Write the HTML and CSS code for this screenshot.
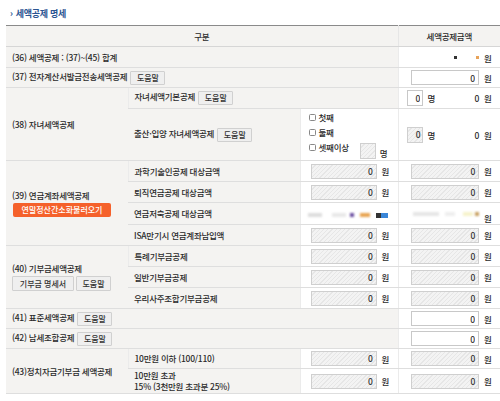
FILE: index.html
```html
<!DOCTYPE html>
<html lang="ko">
<head>
<meta charset="utf-8">
<link rel="stylesheet" href="styles.css">
</head>
<body>
<div class="wrap">
  <h2 class="title"><span class="arrow">›</span>세액공제 명세</h2>
  <table class="grid">
    <colgroup><col class="c1"><col class="c2"><col class="c3"><col class="c4"></colgroup>
    <thead>
      <tr class="h-head"><th colspan="3">구분</th><th>세액공제금액</th></tr>
    </thead>
    <tbody>
      <tr class="h21">
        <td colspan="3" class="lbl">(36) 세액공제 : (37)~(45) 합계</td>
        <td class="val"><span class="sq dark"></span><span class="sq orange"></span><span class="unit">원</span></td>
      </tr>
      <tr class="h20">
        <td colspan="3" class="lbl">(37) 전자계산서발급전송세액공제 <button class="btn">도움말</button></td>
        <td class="val"><input class="inp" value="0"><span class="unit">원</span></td>
      </tr>
      <tr class="h21">
        <td rowspan="2" class="lbl">(38) 자녀세액공제</td>
        <td colspan="2" class="lbl">자녀세액기본공제 <button class="btn">도움말</button></td>
        <td class="val"><span class="pair"><input class="inp small" value="0"><span class="unit">명</span></span><span class="num">0</span><span class="unit">원</span></td>
      </tr>
      <tr class="h52">
        <td class="lbl">출산·입양 자녀세액공제 <button class="btn">도움말</button></td>
        <td class="checks">
          <label class="chk"><span class="box"></span>첫째</label>
          <label class="chk"><span class="box"></span>둘째</label>
          <div class="chk-row"><label class="chk"><span class="box"></span>셋째이상</label><span class="cnt"><span class="inp sq16 dis"></span><span class="unit">명</span></span></div>
        </td>
        <td class="val"><span class="pair"><span class="inp small dis">0</span><span class="unit">명</span></span><span class="num">0</span><span class="unit">원</span></td>
      </tr>
      <tr class="h21">
        <td rowspan="4" class="lbl">
          <div>(39) 연금계좌세액공제</div>
          <button class="btn-orange">연말정산간소화불러오기</button>
        </td>
        <td class="lbl">과학기술인공제 대상금액</td>
        <td class="val"><span class="inp mid dis">0</span><span class="unit">원</span></td>
        <td class="val"><span class="inp dis">0</span><span class="unit">원</span></td>
      </tr>
      <tr class="h21">
        <td class="lbl">퇴직연금공제 대상금액</td>
        <td class="val"><span class="inp mid dis">0</span><span class="unit">원</span></td>
        <td class="val"><span class="inp dis">0</span><span class="unit">원</span></td>
      </tr>
      <tr class="h22">
        <td class="lbl">연금저축공제 대상금액</td>
        <td class="val blur-cell">
          <span class="bl g1"></span><span class="bl g2"></span><span class="bl p1"></span><span class="bl o1"></span><span class="bl b1"></span>
        </td>
        <td class="val blur-cell">
          <span class="bl g3"></span><span class="bl g4"></span><span class="bl y1"></span><span class="bl t1"></span><span class="unit low">원</span>
        </td>
      </tr>
      <tr class="h21">
        <td class="lbl">ISA만기시 연금계좌납입액</td>
        <td class="val"><span class="inp mid dis">0</span><span class="unit">원</span></td>
        <td class="val"><span class="inp dis">0</span><span class="unit">원</span></td>
      </tr>
      <tr class="h21">
        <td rowspan="3" class="lbl">
          <div>(40) 기부금세액공제</div>
          <div class="btns"><button class="btn wide">기부금 명세서</button><button class="btn">도움말</button></div>
        </td>
        <td class="lbl">특례기부금공제</td>
        <td class="val"><span class="inp mid dis">0</span><span class="unit">원</span></td>
        <td class="val"><span class="inp dis">0</span><span class="unit">원</span></td>
      </tr>
      <tr class="h21">
        <td class="lbl">일반기부금공제</td>
        <td class="val"><span class="inp mid dis">0</span><span class="unit">원</span></td>
        <td class="val"><span class="inp dis">0</span><span class="unit">원</span></td>
      </tr>
      <tr class="h21">
        <td class="lbl">우리사주조합기부금공제</td>
        <td class="val"><span class="inp mid dis">0</span><span class="unit">원</span></td>
        <td class="val"><span class="inp dis">0</span><span class="unit">원</span></td>
      </tr>
      <tr class="h20">
        <td colspan="3" class="lbl">(41) 표준세액공제 <button class="btn">도움말</button></td>
        <td class="val"><input class="inp" value="0"><span class="unit">원</span></td>
      </tr>
      <tr class="h20">
        <td colspan="3" class="lbl">(42) 납세조합공제 <button class="btn">도움말</button></td>
        <td class="val"><input class="inp" value="0"><span class="unit">원</span></td>
      </tr>
      <tr class="h20">
        <td rowspan="2" class="lbl">(43)정치자금기부금 세액공제</td>
        <td class="lbl">10만원 이하 (100/110)</td>
        <td class="val"><span class="inp mid dis">0</span><span class="unit">원</span></td>
        <td class="val"><span class="inp dis">0</span><span class="unit">원</span></td>
      </tr>
      <tr class="h25">
        <td class="lbl two">10만원 초과<br>15% (3천만원 초과분 25%)</td>
        <td class="val"><span class="inp mid dis">0</span><span class="unit">원</span></td>
        <td class="val"><span class="inp dis">0</span><span class="unit">원</span></td>
      </tr>
    </tbody>
  </table>
</div>
</body>
</html>
```
FILE: styles.css
```css
* { box-sizing: border-box; }
html, body { margin: 0; padding: 0; background: #fff; }
body {
  font-family: "Noto Sans CJK KR", "Noto Sans", sans-serif;
  font-size: 8.5px;
  font-weight: 500;
  color: #2a2a2a;
  letter-spacing: -0.25px;
}
.wrap { padding: 8px 0 0 6px; width: 500px; }
.title {
  margin: 0 0 5px 4px;
  font-size: 9px;
  font-weight: bold;
  color: #2b5592;
  line-height: 11px;
  height: 12px;
}
.arrow { font-size: 9px; margin-right: 3px; color: #2b5592; }
.grid {
  width: 494px;
  table-layout: fixed;
  border-collapse: collapse;
  border-top: 1px solid #8a8a8a;
}
.c1 { width: 122px; }
.c2 { width: 172px; }
.c3 { width: 98px; }
.c4 { width: 102px; }
.grid th {
  height: 21px;
  background: #f4f3f1;
  font-weight: 500;
  border-bottom: 1px solid #d6d6d6;
  border-left: 1px solid #e6e6e6;
  padding: 0;
}
.grid th:first-child { border-left: none; }
.grid td {
  padding: 0;
  border-bottom: 1px solid #dedede;
  border-left: 1px solid #ebebeb;
  vertical-align: middle;
  white-space: nowrap;
}
.grid td:first-child { border-left: none; }
.h20 { height: 20px; }
.h21 { height: 21px; }
.h22 { height: 22px; }
.h25 { height: 25px; }
.h52 { height: 52px; }
.lbl { background: #f4f3f1; padding-left: 6px !important; line-height: 11px; }
.lbl.two { line-height: 11px; }
.val { background: #fff; text-align: right; padding-right: 7px !important; }
.unit { display: inline-block; margin-left: 5px; width: 9px; text-align: left; vertical-align: middle; }
.unit.low { position: relative; top: 4px; }
.inp {
  display: inline-block;
  vertical-align: middle;
  width: 68px;
  height: 15px;
  border: 1px solid #c8c8c8;
  background: #fff;
  font: inherit;
  color: #333;
  text-align: right;
  padding: 0 3px;
  line-height: 13px;
  margin: 0;
}
.inp.mid { width: 66px; }
.inp.small { width: 16px; height: 16px; padding: 0 2px; }
.inp.sq16 { width: 16px; height: 16px; }
.dis {
  background: repeating-linear-gradient(135deg, #f3f3f3 0 2px, #e6e6e6 2px 3px);
  border-color: #cfcfcf;
}
.pair { display: inline-block; margin-right: 38px; }
.pair .unit { margin-left: 4px; }
.num { display: inline-block; vertical-align: middle; }
.sq { display: inline-block; width: 3px; height: 3px; vertical-align: middle; }
.sq.dark { background: #333; margin-right: 19px; }
.sq.orange { background: #e8a35a; }
.btn {
  font: inherit;
  font-size: 8px;
  color: #333;
  background: #efefef;
  border: 1px solid #d0d0d0;
  border-radius: 1px;
  height: 14px;
  width: 35px;
  padding: 0;
  margin-left: 1px;
  vertical-align: middle;
  line-height: 12px;
}
.btns { margin-top: 2px; display: flex; gap: 2px; }
.btns .btn { margin-left: 0; height: 15px; flex: none; }
.btns .btn.wide { width: 62px; }
.btn-orange {
  font: inherit;
  font-size: 8px;
  color: #fff;
  background: #f5612b;
  border: none;
  border-radius: 2px;
  width: 98px;
  height: 14px;
  margin: 2px 0 0 1px;
  padding: 0;
  line-height: 14px;
}
.checks { background: #fff; padding-left: 8px !important; line-height: 11px; }
.chk { display: flex; align-items: center; height: 15px; }
.box {
  display: inline-block;
  width: 7px;
  height: 7px;
  border: 1px solid #888;
  border-radius: 1.5px;
  margin-right: 3px;
  background: #fff;
}
.chk-row { display: flex; align-items: flex-start; }
.cnt { display: inline-flex; align-items: flex-end; margin-left: 11px; margin-top: 3px; }
.cnt .unit { margin-left: 4px; }
.blur-cell { position: relative; }
.bl { display: inline-block; vertical-align: middle; height: 4px; filter: blur(0.8px); }
.g1 { width: 14px; background: #ddd; margin-right: 10px; }
.g2 { width: 14px; background: #e8e8e8; margin-right: 4px; }
.p1 { width: 4px; background: #6a4ea0; margin-right: 6px; }
.o1 { width: 10px; background: #e8a450; margin-right: 6px; }
.b1 { width: 12px; height: 5px; background: linear-gradient(90deg, #333 40%, #3a86d8 40%); filter: blur(0.4px); margin-right: 3px; }
.g3 { width: 26px; background: #e6e6e6; margin-right: 6px; }
.g4 { width: 10px; background: #eee; margin-right: 8px; }
.y1 { width: 10px; background: #f7f3cc; margin-right: 2px; }
.t1 { width: 4px; background: #c8a060; margin-right: 0; }
```
